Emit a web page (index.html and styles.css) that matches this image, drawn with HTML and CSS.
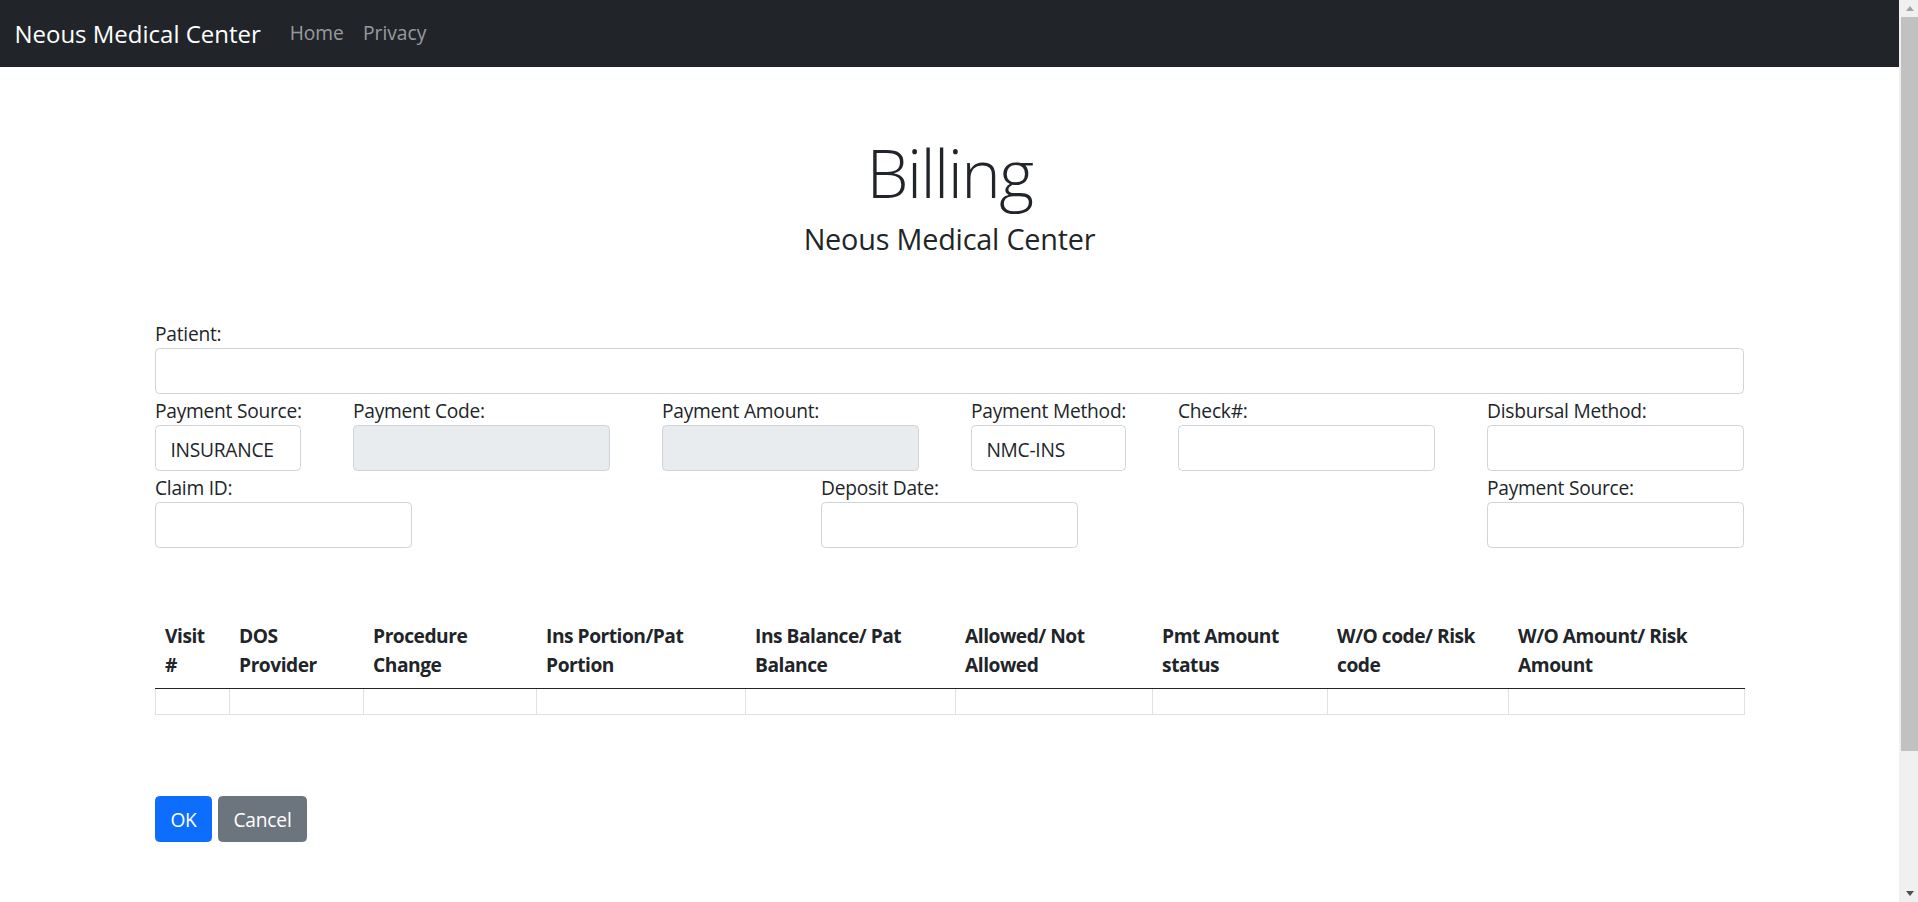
FILE: index.html
```html
<!DOCTYPE html>
<html lang="en">
<head>
<meta charset="utf-8">
<title>Billing - Neous Medical Center</title>
<link rel="stylesheet" href="styles.css">
</head>
<body>
<div class="page">
  <header class="navbar">
    <a class="brand" href="#">Neous Medical Center</a>
    <nav class="nav-links">
      <a class="nav-link" href="#">Home</a>
      <a class="nav-link" href="#">Privacy</a>
    </nav>
  </header>

  <main class="container">
    <div class="page-title">
      <h1 class="display">Billing</h1>
      <h4 class="subtitle">Neous Medical Center</h4>
    </div>

    <form class="billing-form">
      <div class="field">
        <label for="patient">Patient:</label>
        <input id="patient" class="form-control" type="text">
      </div>

      <div class="form-row">
        <div class="field w-source">
          <label for="psource">Payment Source:</label>
          <input id="psource" class="form-control" type="text" value="INSURANCE">
        </div>
        <div class="field w-std">
          <label for="pcode">Payment Code:</label>
          <input id="pcode" class="form-control" type="text" disabled>
        </div>
        <div class="field w-std">
          <label for="pamount">Payment Amount:</label>
          <input id="pamount" class="form-control" type="text" disabled>
        </div>
        <div class="field w-method">
          <label for="pmethod">Payment Method:</label>
          <input id="pmethod" class="form-control" type="text" value="NMC-INS">
        </div>
        <div class="field w-std">
          <label for="check">Check#:</label>
          <input id="check" class="form-control" type="text">
        </div>
        <div class="field w-std">
          <label for="disb">Disbursal Method:</label>
          <input id="disb" class="form-control" type="text">
        </div>
      </div>

      <div class="form-row">
        <div class="field w-std">
          <label for="claim">Claim ID:</label>
          <input id="claim" class="form-control" type="text">
        </div>
        <div class="field w-std">
          <label for="deposit">Deposit Date:</label>
          <input id="deposit" class="form-control" type="text">
        </div>
        <div class="field w-std">
          <label for="psource2">Payment Source:</label>
          <input id="psource2" class="form-control" type="text">
        </div>
      </div>
    </form>

    <table class="billing-table">
      <colgroup>
        <col class="c-visit">
        <col class="c-dos">
        <col class="c-proc">
        <col class="c-insp">
        <col class="c-insb">
        <col class="c-allow">
        <col class="c-pmt">
        <col class="c-wocode">
        <col class="c-woamt">
      </colgroup>
      <thead>
        <tr>
          <th>Visit<br>#</th>
          <th>DOS<br>Provider</th>
          <th>Procedure<br>Change</th>
          <th>Ins Portion/Pat<br>Portion</th>
          <th>Ins Balance/ Pat<br>Balance</th>
          <th>Allowed/ Not<br>Allowed</th>
          <th>Pmt Amount<br>status</th>
          <th>W/O code/ Risk<br>code</th>
          <th>W/O Amount/ Risk<br>Amount</th>
        </tr>
      </thead>
      <tbody>
        <tr>
          <td></td><td></td><td></td><td></td><td></td><td></td><td></td><td></td><td></td>
        </tr>
      </tbody>
    </table>

    <div class="actions">
      <button type="button" class="btn btn-primary">OK</button>
      <button type="button" class="btn btn-secondary">Cancel</button>
    </div>
  </main>
</div>

<div class="scrollbar" aria-hidden="true">
  <span class="sb-arrow sb-up"></span>
  <span class="sb-track"><span class="sb-thumb"></span></span>
  <span class="sb-arrow sb-down"></span>
</div>
</body>
</html>
```

FILE: styles.css
```css
html {
  overflow: hidden;
}

body {
  margin: 0;
  font-family: "Open Sans", "Liberation Sans", sans-serif;
  font-size: 19.2px;
  line-height: 28.8px;
  color: #212529;
  background: #fff;
}

.page {
  margin-right: 19px;
}

/* Window scrollbar (drawn over the right edge) */
.scrollbar {
  position: fixed;
  top: 0;
  right: 0;
  width: 19px;
  height: 100vh;
  background: #f0f0f0;
  display: flex;
  flex-direction: column;
}

.sb-arrow {
  flex: none;
  height: 17px;
  display: flex;
  align-items: center;
  justify-content: center;
  padding-left: 2px;
}

.sb-up::before {
  content: "";
  border-left: 4.5px solid transparent;
  border-right: 4.5px solid transparent;
  border-bottom: 5px solid #a3a3a3;
}

.sb-down::before {
  content: "";
  border-left: 4.5px solid transparent;
  border-right: 4.5px solid transparent;
  border-top: 5px solid #505050;
}

.sb-track {
  flex: 1;
  padding-left: 2px;
}

.sb-thumb {
  display: block;
  height: 734px;
  background: #c1c1c1;
}

/* Navbar */
.navbar {
  height: 67px;
  background: #212529;
  display: flex;
  align-items: center;
  padding: 0 14.4px;
}

.brand {
  font-size: 24px;
  line-height: 36px;
  color: #fff;
  text-decoration: none;
  margin-right: 19.2px;
}

.nav-links {
  display: flex;
}

.nav-link {
  padding: 0 9.6px;
  color: rgba(255, 255, 255, 0.55);
  text-decoration: none;
}

/* Main */
.container {
  width: 1589px;
  margin: 0 auto;
  padding: 65px 0 223px;
}

.page-title {
  text-align: center;
}

.display {
  margin: 0 0 9.6px;
  font-size: 67px;
  font-weight: 300;
  line-height: 80px;
  letter-spacing: -1.6px;
}

.subtitle {
  margin: 0;
  font-size: 28.8px;
  font-weight: 400;
  line-height: 34.6px;
  letter-spacing: -0.2px;
}

/* Form */
.billing-form {
  margin-top: 63px;
  display: flex;
  flex-direction: column;
  gap: 2.2px;
}

.form-row {
  display: flex;
  justify-content: space-between;
}

.field label {
  display: block;
  padding-top: 1px;
  line-height: 27.8px;
  white-space: nowrap;
  letter-spacing: -0.25px;
}

.w-source { width: 146px; }
.w-method { width: 155px; }
.w-std { width: 257px; }

.form-control {
  display: block;
  box-sizing: border-box;
  width: 100%;
  height: 46px;
  margin: 0;
  padding: 3px 14.4px 0;
  font-family: inherit;
  font-size: 19.2px;
  color: #212529;
  background: #fff;
  border: 1px solid #ced4da;
  border-radius: 4.5px;
  letter-spacing: -0.25px;
}

.form-control:disabled {
  background: #e9ecef;
}

/* Table */
.billing-table {
  margin-top: 62px;
  width: 100%;
  table-layout: fixed;
  border-collapse: collapse;
}

.c-visit { width: 74px; }
.c-dos { width: 134px; }
.c-proc { width: 173px; }
.c-insp { width: 209px; }
.c-insb { width: 210px; }
.c-allow { width: 197px; }
.c-pmt { width: 175px; }
.c-wocode { width: 181px; }
.c-woamt { width: 236px; }

.billing-table th {
  padding: 10.6px 9.6px 8.6px;
  text-align: left;
  font-weight: 700;
  line-height: 29.4px;
  white-space: nowrap;
  letter-spacing: -0.5px;
  border-bottom: 1px solid #212529;
  vertical-align: bottom;
}

.billing-table td {
  height: 25px;
  padding: 0;
  border: 1px solid #dee2e6;
  border-top: 0;
}

/* Buttons */
.actions {
  margin-top: 81px;
  display: flex;
  gap: 6px;
}

.btn {
  height: 46px;
  padding: 3px 14.4px 0;
  font-family: inherit;
  font-size: 19.2px;
  line-height: 28.8px;
  color: #fff;
  border: 1px solid transparent;
  border-radius: 4.5px;
  letter-spacing: -0.2px;
}

.btn-primary {
  background: #0d6efd;
  border-color: #0d6efd;
}

.btn-secondary {
  background: #6c757d;
  border-color: #6c757d;
}
```
